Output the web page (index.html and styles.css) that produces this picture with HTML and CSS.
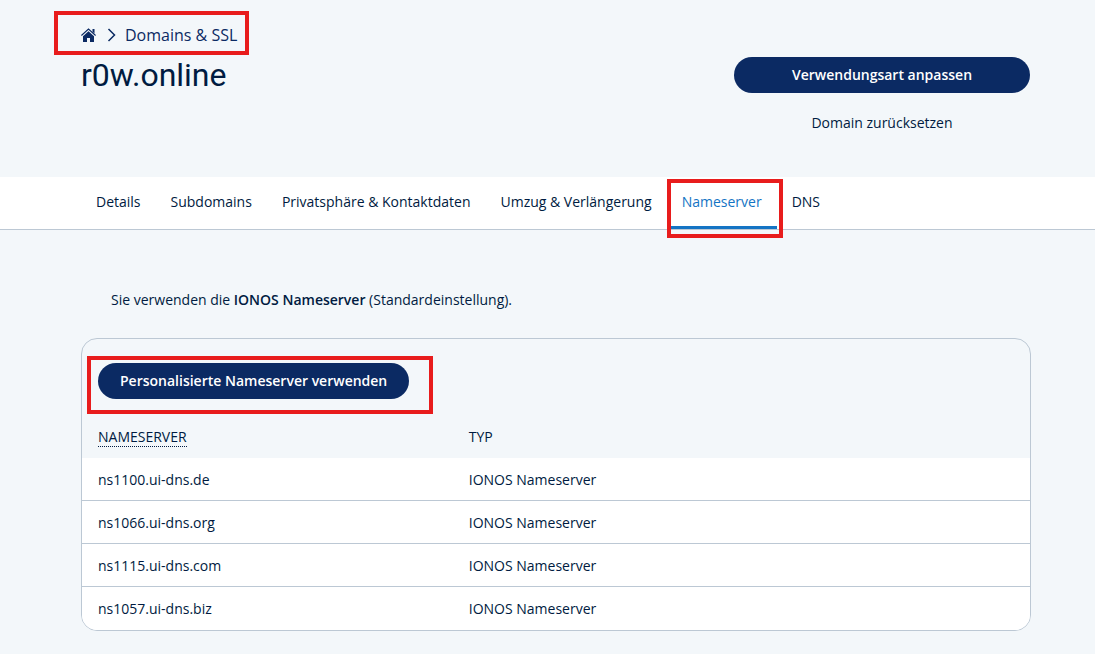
FILE: index.html
```html
<!DOCTYPE html>
<html lang="de">
<head>
<meta charset="utf-8">
<meta name="viewport" content="width=device-width, initial-scale=1">
<title>r0w.online – Nameserver</title>
<link rel="stylesheet" href="styles.css">
</head>
<body>
<header class="page-header">
  <div class="heading">
    <nav class="breadcrumb marked marked-breadcrumb" aria-label="Brotkrumen">
      <a class="home" href="#" aria-label="Startseite">
        <svg width="16" height="16" viewBox="0 0 16 16" aria-hidden="true">
          <path d="M.4 8.500 7.500 2l7.100 6.500" fill="none" stroke="#0b2a63" stroke-width="1.100"/>
          <path d="M11.500 2h2v4.500l-2-1.800z" fill="#0b2a63"/>
          <path d="M7.500 4.200 2 9.200V15h4v-4h3v4h4V9.200z" fill="#0b2a63"/>
        </svg>
      </a>
      <svg class="chevron" width="10" height="14" viewBox="0 0 10 14" aria-hidden="true">
        <path d="m1.500 1 6 6-6 6" fill="none" stroke="#0b2a63" stroke-width="1.500"/>
      </svg>
      <a class="crumb" href="#">Domains &amp; SSL</a>
    </nav>
    <h1 class="title">r0w.online</h1>
  </div>
  <div class="actions">
    <button class="button" type="button">Verwendungsart anpassen</button>
    <a class="reset" href="#">Domain zurücksetzen</a>
  </div>
</header>
<nav class="tabs" aria-label="Domain-Bereiche">
  <a class="tab" href="#">Details</a>
  <a class="tab" href="#">Subdomains</a>
  <a class="tab" href="#">Privatsphäre &amp; Kontaktdaten</a>
  <a class="tab" href="#">Umzug &amp; Verlängerung</a>
  <a class="tab tab-active marked marked-tab" href="#" aria-current="page">Nameserver</a>
  <a class="tab" href="#">DNS</a>
</nav>
<main class="content">
  <p class="intro">Sie verwenden die <strong>IONOS Nameserver</strong> (Standardeinstellung).</p>
  <section class="card">
    <div class="toolbar">
      <div class="marked marked-button">
        <button class="button" type="button">Personalisierte Nameserver verwenden</button>
      </div>
    </div>
    <table class="servers">
      <thead>
        <tr><th class="col-name" scope="col"><span class="hint">NAMESERVER</span></th><th scope="col">TYP</th></tr>
      </thead>
      <tbody>
        <tr><td>ns1100.ui-dns.de</td><td>IONOS Nameserver</td></tr>
        <tr><td>ns1066.ui-dns.org</td><td>IONOS Nameserver</td></tr>
        <tr><td>ns1115.ui-dns.com</td><td>IONOS Nameserver</td></tr>
        <tr><td>ns1057.ui-dns.biz</td><td>IONOS Nameserver</td></tr>
      </tbody>
    </table>
  </section>
</main>
</body>
</html>
```
FILE: styles.css
```css
* {
  box-sizing: border-box;
}

body {
  margin: 0;
  background: #f3f7fa;
  color: #001b41;
  font: 14px/20px "Open Sans", "Noto Sans", sans-serif;
}

a {
  color: inherit;
  text-decoration: none;
}

.page-header {
  display: flex;
  justify-content: space-between;
  gap: 32px;
  padding: 23px 65px 44px 81px;
}

.breadcrumb {
  display: flex;
  align-items: center;
  width: fit-content;
  font-size: 16px;
  line-height: 24px;
}

.home,
.chevron {
  display: block;
}

.chevron {
  margin: 0 8px 0 10px;
}

.home svg {
  display: block;
}

.crumb {
  color: #0b2a63;
}

.title {
  margin: 8px 0 0;
  font-family: Roboto, "Open Sans", sans-serif;
  font-size: 32px;
  font-weight: 400;
  line-height: 40px;
}

.actions {
  display: flex;
  flex-direction: column;
  align-items: stretch;
  gap: 20px;
  width: 296px;
  padding-top: 34px;
  text-align: center;
}

.button {
  height: 36px;
  padding: 0 22px;
  border: 0;
  border-radius: 18px;
  background: #0b2a63;
  color: #fff;
  font: 600 14px/20px "Open Sans", "Noto Sans", sans-serif;
  cursor: pointer;
}

.tabs {
  display: flex;
  padding: 0 66px 0 81px;
  border-bottom: 1px solid #bcc8d4;
  background: #fff;
}

.tab {
  padding: 15px 15px 14px;
  border-bottom: 3px solid transparent;
}

.tab-active {
  border-color: #1474c4;
  color: #1474c4;
}

.content {
  padding: 60px 64px 23px 81px;
}

.intro {
  margin: 0;
  padding-left: 30px;
}

.intro strong {
  font-weight: 600;
}

.card {
  margin-top: 28px;
  overflow: hidden;
  border: 1px solid #bcc8d4;
  border-radius: 16px;
}

.toolbar {
  display: flex;
  padding: 24px 16px 17px;
}

.servers {
  width: 100%;
  border-spacing: 0;
  table-layout: fixed;
}

.col-name {
  width: 39%;
}

.servers th,
.servers td {
  padding: 11px 16px;
  text-align: left;
  font-weight: 400;
}

.servers th + th,
.servers td + td {
  padding-left: 17px;
}

.servers td {
  padding-top: 12px;
  padding-bottom: 10px;
  border-bottom: 1px solid #bcc8d4;
  background: #fff;
}

.servers tr:last-child td {
  border-bottom-color: #fff;
}

.hint {
  border-bottom: 1px dotted #001b41;
}

/* Red highlight frames */
.marked {
  position: relative;
}

.marked::after {
  content: "";
  position: absolute;
  border: 4px solid #e81c1c;
  pointer-events: none;
}

.marked-breadcrumb::after {
  inset: -12px -12px -8px -27px;
}

.marked-tab::after {
  inset: 2px -6px -12px 0;
}

.marked-button::after {
  inset: -7px -24px -15px -11px;
}
```
